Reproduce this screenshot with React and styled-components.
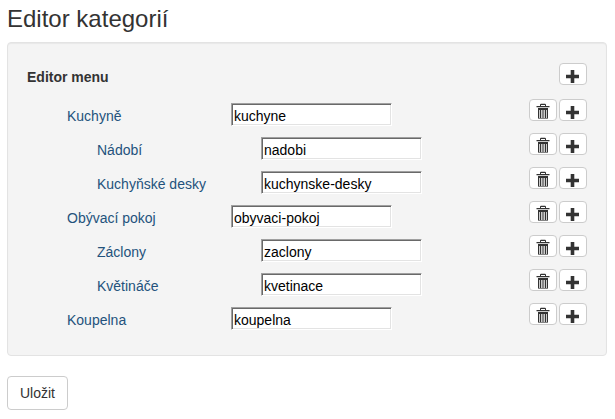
import React, {useState} from 'react'
import styled, {createGlobalStyle} from 'styled-components'


const GlobalStyle = createGlobalStyle`
    * {
        box-sizing: border-box;
    }

    body {
        margin: 0;
        background-color: #fff;
        color: #333;
        font-family: "Liberation Sans", Arial, sans-serif;
        font-size: 14px;
        line-height: 20px;
    }
`;

const Page = styled.main`
        padding: 6px 8px 8px 7px;
`;

const Title = styled.h1`
        margin: 0 0 10px;
        font-size: 24px;
        font-weight: 400;
        line-height: 26px;
`;

const Well = styled.section`
        margin-bottom: 20px;
        padding: 20px 19px 18px;
        background-color: #f4f4f4;
        border: 1px solid #e3e3e3;
        border-radius: 4px;
        box-shadow: inset 0 1px 1px rgba(0, 0, 0, 0.05);
`;

const Header = styled.div`
        display: flex;
        justify-content: space-between;
        align-items: flex-start;
        height: 36px;
`;

const Heading = styled.h2`
        margin: 4px 0 0;
        font-size: 14px;
        font-weight: 700;
        line-height: 20px;
`;

const List = styled.ul`
        list-style: none;
        margin: 0;
        padding: 0;
`;

const Row = styled.li`
        display: flex;
        align-items: flex-start;
        height: 34px;
        padding-left: ${({$nested}) => $nested ? '70px' : '40px'};
`;

const Name = styled.label`
        width: 164px;
        padding-top: 7px;
        color: #23527c;
`;

const Slug = styled.input`
        width: 161px;
        height: 23px;
        margin: 4px 0 0;
        padding: 3px 2px 0;
        background-color: #fff;
        border: 1px solid;
        border-color: #a0a0a0 #fff #fff #a0a0a0;
        border-radius: 0;
        box-shadow: inset 1px 1px 0 #696969, inset -1px -1px 0 #e3e3e3;
        color: #000;
        font-family: inherit;
        font-size: 14px;
        outline: none;
`;

const Actions = styled.div`
        display: flex;
        gap: 2px;
        margin-left: auto;
`;

const IconButton = styled.button`
        display: flex;
        justify-content: center;
        width: 28px;
        height: 22px;
        padding: 3px 0 0;
        background-color: #fff;
        border: 1px solid #ccc;
        border-radius: 4px;
        color: #333;
        cursor: pointer;
`;

const SaveButton = styled.button`
        padding: 6px 12px;
        background-color: #fff;
        border: 1px solid #ccc;
        border-radius: 4px;
        color: #333;
        font-family: inherit;
        font-size: 14px;
        line-height: 20px;
        cursor: pointer;
`;

const categories = [
    {name: 'Kuchyně', slug: 'kuchyne'},
    {name: 'Nádobí', slug: 'nadobi', nested: true},
    {name: 'Kuchyňské desky', slug: 'kuchynske-desky', nested: true},
    {name: 'Obývací pokoj', slug: 'obyvaci-pokoj'},
    {name: 'Záclony', slug: 'zaclony', nested: true},
    {name: 'Květináče', slug: 'kvetinace', nested: true},
    {name: 'Koupelna', slug: 'koupelna'},
]

function PlusIcon() {
    return (
        <svg width="14" height="16" viewBox="0 0 14 16" fill="currentColor" aria-hidden="true">
            <path d="M4.7 3h3.6v4.7H13v3.6H8.3V16H4.7v-4.7H0V7.7h4.7z" />
        </svg>
    )
}

function TrashIcon() {
    return (
        <svg width="14" height="16" viewBox="0 0 14 16" fill="currentColor" aria-hidden="true">
            <path d="M4 3V1.4L4.8.8h4.4l.8.6V3h3.5v1.2H.5V3zM5 3h4V2H5z" />
            <path d="M2 5h10v10.6H2z" />
            <path d="M3 7h1v8H3zM5 7h1v8H5zM8 7h1v8H8zM10 7h1v8h-1z" fill="#ccc" />
            <path d="M6 7h2v8H6z" fill="#888" />
        </svg>
    )
}

function CategoryRow({name, slug, nested}) {
    const [value, setValue] = useState(slug)

    return (
        <Row $nested={nested}>
            <Name htmlFor={slug}>{name}</Name>
            <Slug id={slug} type="text" value={value} onChange={(e) => setValue(e.target.value)} />
            <Actions>
                <IconButton type="button" aria-label="Smazat"><TrashIcon /></IconButton>
                <IconButton type="button" aria-label="Přidat"><PlusIcon /></IconButton>
            </Actions>
        </Row>
    )
}

function App() {
    return (
        <>
            <GlobalStyle />
            <Page>
                <Title>Editor kategorií</Title>
                <Well>
                    <Header>
                        <Heading>Editor menu</Heading>
                        <IconButton type="button" aria-label="Přidat"><PlusIcon /></IconButton>
                    </Header>
                    <List>
                        {categories.map((category) => (
                            <CategoryRow key={category.slug} {...category} />
                        ))}
                    </List>
                </Well>
                <SaveButton type="button">Uložit</SaveButton>
            </Page>
        </>
    )
}

export default App
